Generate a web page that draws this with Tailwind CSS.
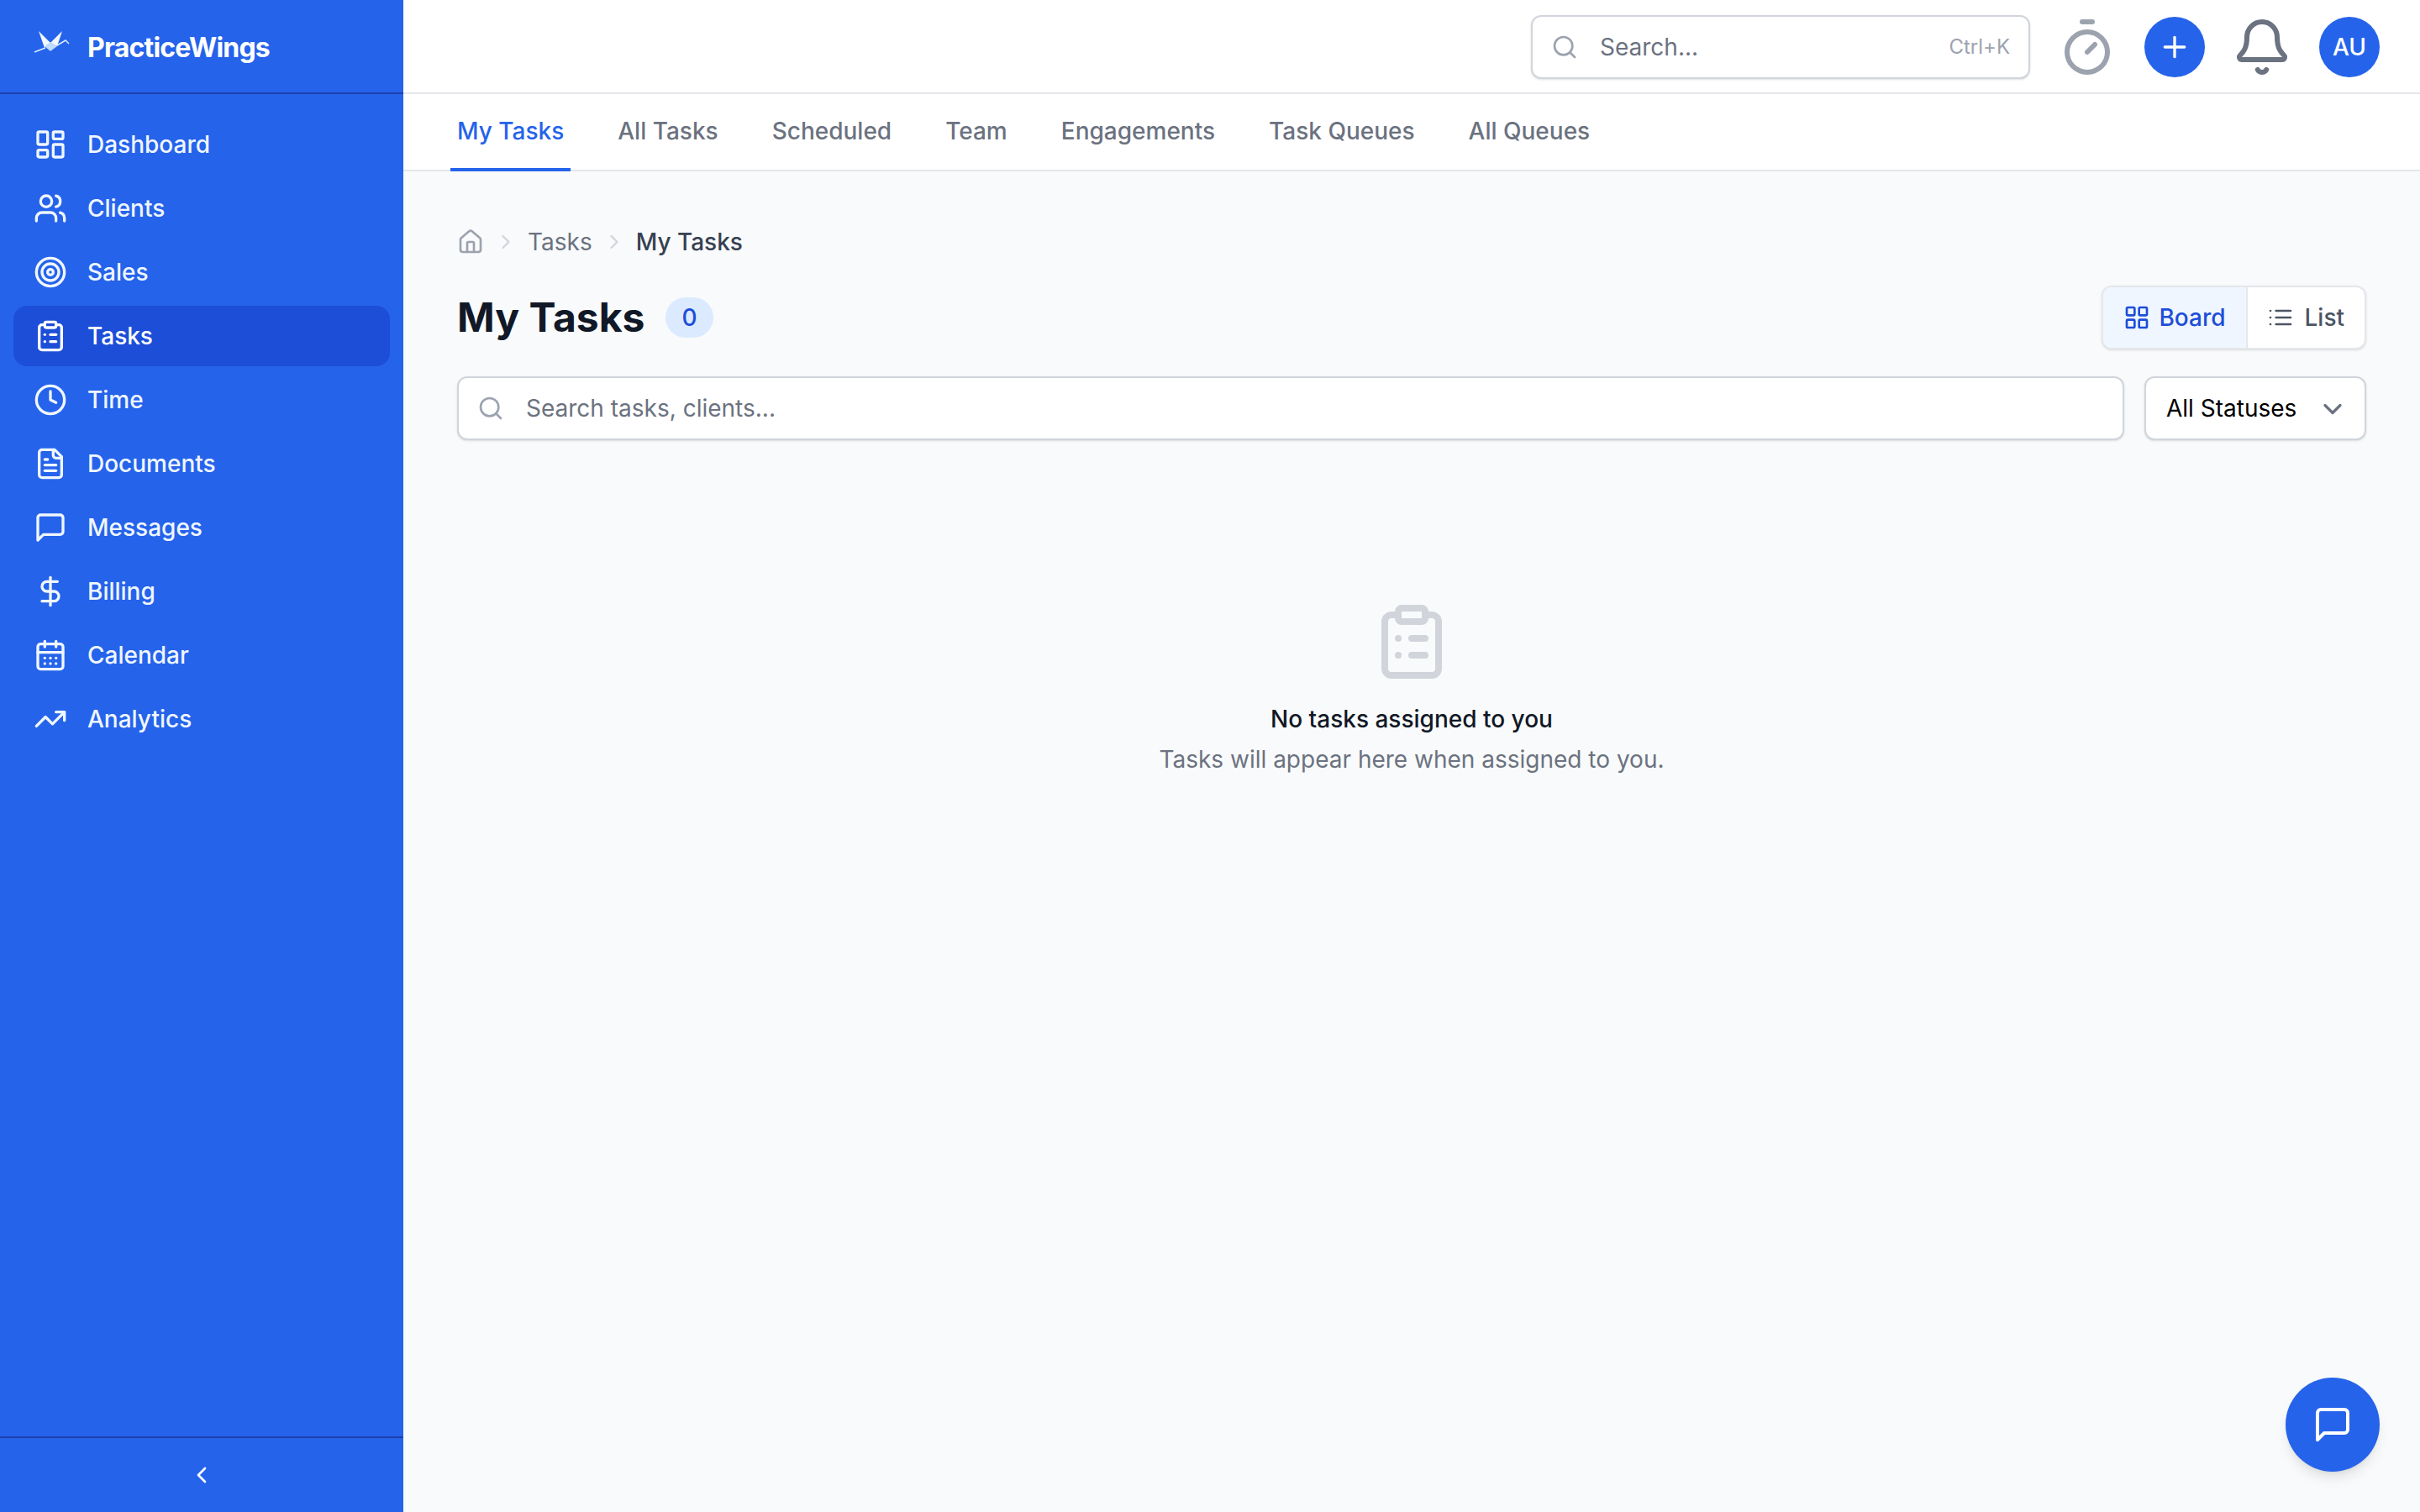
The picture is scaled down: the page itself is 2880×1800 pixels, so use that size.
<!DOCTYPE html>
<html lang="en">
<head>
  <meta charset="UTF-8">
  <meta name="viewport" content="width=device-width, initial-scale=1.0">
  <title>PracticeWings - My Tasks</title>
  <script src="https://cdn.jsdelivr.net/npm/@tailwindcss/browser@4"></script>
</head>
<body class="font-[Inter,sans-serif] bg-[#f9fafb] h-screen w-full overflow-hidden flex relative">

  <!-- sidebar -->
  <aside class="w-[480px] h-full shrink-0 bg-[#2563eb] flex flex-col text-[#eff6ff]">
    <div class="h-[112px] shrink-0 border-b-2 border-[#1e40af] flex items-center pl-[40px] pt-[4px] gap-[20px]">
      <svg class="w-[44px] h-[32px] -mt-[14px]" viewBox="40 34 44 32">
        <polygon points="46,37 60,51 53,57" fill="#ffffff" fill-opacity="0.95"/>
        <polygon points="74,37 60,51 68,55" fill="#ffffff" fill-opacity="0.95"/>
        <polygon points="60,50 68,55 60,61 53,55" fill="#bfdbfe"/>
        <path d="M41 62 L54 57 M68 54 L78 48 L82 52" fill="none" stroke="#dbeafe" stroke-width="1.5"/>
      </svg>
      <span class="text-[32px] leading-[48px] font-bold text-white tracking-[-0.8px]">PracticeWings</span>
    </div>

    <nav class="flex-1 px-[16px] pt-[24px] flex flex-col gap-[4px] text-[28px] leading-[40px] font-medium">
      <a class="h-[72px] px-[24px] rounded-[16px] flex items-center gap-[24px]">
        <svg class="w-[40px] h-[40px]" viewBox="0 0 24 24" fill="none" stroke="currentColor" stroke-width="2" stroke-linecap="round" stroke-linejoin="round"><rect x="3" y="3" width="7" height="9" rx="1"/><rect x="14" y="3" width="7" height="5" rx="1"/><rect x="14" y="12" width="7" height="9" rx="1"/><rect x="3" y="16" width="7" height="5" rx="1"/></svg>
        Dashboard
      </a>
      <a class="h-[72px] px-[24px] rounded-[16px] flex items-center gap-[24px]">
        <svg class="w-[40px] h-[40px]" viewBox="0 0 24 24" fill="none" stroke="currentColor" stroke-width="2" stroke-linecap="round" stroke-linejoin="round"><path d="M16 21v-2a4 4 0 0 0-4-4H6a4 4 0 0 0-4 4v2"/><circle cx="9" cy="7" r="4"/><path d="M22 21v-2a4 4 0 0 0-3-3.87"/><path d="M16 3.13a4 4 0 0 1 0 7.75"/></svg>
        Clients
      </a>
      <a class="h-[72px] px-[24px] rounded-[16px] flex items-center gap-[24px]">
        <svg class="w-[40px] h-[40px]" viewBox="0 0 24 24" fill="none" stroke="currentColor" stroke-width="2" stroke-linecap="round" stroke-linejoin="round"><circle cx="12" cy="12" r="10"/><circle cx="12" cy="12" r="6"/><circle cx="12" cy="12" r="2"/></svg>
        Sales
      </a>
      <a class="h-[72px] px-[24px] rounded-[16px] flex items-center gap-[24px] bg-[#1d4ed8] text-white">
        <svg class="w-[40px] h-[40px]" viewBox="0 0 24 24" fill="none" stroke="currentColor" stroke-width="2" stroke-linecap="round" stroke-linejoin="round"><rect x="8" y="2" width="8" height="4" rx="1"/><path d="M16 4h2a2 2 0 0 1 2 2v14a2 2 0 0 1-2 2H6a2 2 0 0 1-2-2V6a2 2 0 0 1 2-2h2"/><path d="M12 11h4"/><path d="M12 16h4"/><path d="M8 11h.01"/><path d="M8 16h.01"/></svg>
        Tasks
      </a>
      <a class="h-[72px] px-[24px] rounded-[16px] flex items-center gap-[24px]">
        <svg class="w-[40px] h-[40px]" viewBox="0 0 24 24" fill="none" stroke="currentColor" stroke-width="2" stroke-linecap="round" stroke-linejoin="round"><circle cx="12" cy="12" r="10"/><path d="M12 6v6l4 2"/></svg>
        Time
      </a>
      <a class="h-[72px] px-[24px] rounded-[16px] flex items-center gap-[24px]">
        <svg class="w-[40px] h-[40px]" viewBox="0 0 24 24" fill="none" stroke="currentColor" stroke-width="2" stroke-linecap="round" stroke-linejoin="round"><path d="M15 2H6a2 2 0 0 0-2 2v16a2 2 0 0 0 2 2h12a2 2 0 0 0 2-2V7z"/><path d="M14 2v4a2 2 0 0 0 2 2h4"/><path d="M10 9H8"/><path d="M16 13H8"/><path d="M16 17H8"/></svg>
        Documents
      </a>
      <a class="h-[72px] px-[24px] rounded-[16px] flex items-center gap-[24px]">
        <svg class="w-[40px] h-[40px]" viewBox="0 0 24 24" fill="none" stroke="currentColor" stroke-width="2" stroke-linecap="round" stroke-linejoin="round"><path d="M21 15a2 2 0 0 1-2 2H7l-4 4V5a2 2 0 0 1 2-2h14a2 2 0 0 1 2 2z"/></svg>
        Messages
      </a>
      <a class="h-[72px] px-[24px] rounded-[16px] flex items-center gap-[24px]">
        <svg class="w-[40px] h-[40px]" viewBox="0 0 24 24" fill="none" stroke="currentColor" stroke-width="2" stroke-linecap="round" stroke-linejoin="round"><line x1="12" x2="12" y1="2" y2="22"/><path d="M17 5H9.5a3.5 3.5 0 0 0 0 7h5a3.5 3.5 0 0 1 0 7H6"/></svg>
        Billing
      </a>
      <a class="h-[72px] px-[24px] rounded-[16px] flex items-center gap-[24px]">
        <svg class="w-[40px] h-[40px]" viewBox="0 0 24 24" fill="none" stroke="currentColor" stroke-width="2" stroke-linecap="round" stroke-linejoin="round"><path d="M8 2v4"/><path d="M16 2v4"/><rect x="3" y="4" width="18" height="18" rx="2"/><path d="M3 10h18"/><path d="M8 14h.01"/><path d="M12 14h.01"/><path d="M16 14h.01"/><path d="M8 18h.01"/><path d="M12 18h.01"/><path d="M16 18h.01"/></svg>
        Calendar
      </a>
      <a class="h-[72px] px-[24px] rounded-[16px] flex items-center gap-[24px]">
        <svg class="w-[40px] h-[40px]" viewBox="0 0 24 24" fill="none" stroke="currentColor" stroke-width="2" stroke-linecap="round" stroke-linejoin="round"><polyline points="22 7 13.5 15.5 8.5 10.5 2 17"/><polyline points="16 7 22 7 22 13"/></svg>
        Analytics
      </a>
    </nav>

    <div class="h-[90px] shrink-0 border-t-2 border-[#1e40af] flex items-center justify-center text-white">
      <svg class="w-[32px] h-[32px]" viewBox="0 0 24 24" fill="none" stroke="currentColor" stroke-width="2" stroke-linecap="round" stroke-linejoin="round"><path d="m15 18-6-6 6-6"/></svg>
    </div>
  </aside>

  <div class="flex-1 min-w-0 flex flex-col">
    <!-- top bar -->
    <header class="h-[112px] shrink-0 bg-white border-b-2 border-[#e5e7eb] flex items-center justify-end pt-[2px] pr-[48px] gap-[32px]">
      <div class="w-[594px] h-[76px] border-2 border-[#d1d5db] rounded-[12px] bg-white flex items-center pl-[22px] pr-[22px] shadow-sm">
        <svg class="w-[32px] h-[32px] text-[#9ca3af] shrink-0" viewBox="0 0 24 24" fill="none" stroke="currentColor" stroke-width="2" stroke-linecap="round" stroke-linejoin="round"><circle cx="11" cy="11" r="8"/><path d="m21 21-4.3-4.3"/></svg>
        <span class="ml-[26px] flex-1 text-[28px] text-[#6b7280]">Search...</span>
        <span class="text-[24px] text-[#9ca3af]">Ctrl+K</span>
      </div>
      <svg class="w-[72px] h-[72px] text-[#9ca3af]" viewBox="0 0 24 24" fill="none" stroke="currentColor" stroke-width="2" stroke-linecap="round" stroke-linejoin="round"><line x1="10" x2="14" y1="2" y2="2"/><line x1="12" x2="15" y1="14" y2="11"/><circle cx="12" cy="14" r="8"/></svg>
      <div class="w-[72px] h-[72px] rounded-full bg-[#2563eb] text-white flex items-center justify-center">
        <svg class="w-[40px] h-[40px]" viewBox="0 0 24 24" fill="none" stroke="currentColor" stroke-width="2" stroke-linecap="round" stroke-linejoin="round"><path d="M5 12h14"/><path d="M12 5v14"/></svg>
      </div>
      <svg class="w-[72px] h-[72px] text-[#6b7280]" viewBox="0 0 24 24" fill="none" stroke="currentColor" stroke-width="2" stroke-linecap="round" stroke-linejoin="round"><path d="M10.268 21a2 2 0 0 0 3.464 0"/><path d="M3.262 15.326A1 1 0 0 0 4 17h16a1 1 0 0 0 .74-1.673C19.41 13.956 18 12.499 18 8A6 6 0 0 0 6 8c0 4.499-1.411 5.956-2.738 7.326"/></svg>
      <div class="w-[72px] h-[72px] rounded-full bg-[#2563eb] text-white text-[28px] font-medium flex items-center justify-center">AU</div>
    </header>

    <!-- tabs -->
    <div class="h-[92px] shrink-0 bg-white border-b-2 border-[#e5e7eb] flex pl-[56px] gap-[48px] text-[28px] font-medium text-[#6b7280]">
      <a class="h-[92px] px-[8px] border-b-4 border-[#2563eb] text-[#2563eb] flex items-center">My Tasks</a>
      <a class="h-[92px] px-[8px] pb-[4px] flex items-center">All Tasks</a>
      <a class="h-[92px] px-[8px] pb-[4px] flex items-center">Scheduled</a>
      <a class="h-[92px] px-[8px] pb-[4px] flex items-center">Team</a>
      <a class="h-[92px] px-[8px] pb-[4px] flex items-center">Engagements</a>
      <a class="h-[92px] px-[8px] pb-[4px] flex items-center">Task Queues</a>
      <a class="h-[92px] px-[8px] pb-[4px] flex items-center">All Queues</a>
    </div>

    <main class="flex-1 px-[64px] pt-[64px]">
      <!-- breadcrumb -->
      <div class="flex items-center gap-[12px] h-[40px] text-[28px]">
        <svg class="w-[32px] h-[32px] text-[#9ca3af]" viewBox="0 0 24 24" fill="none" stroke="currentColor" stroke-width="2" stroke-linecap="round" stroke-linejoin="round"><path d="M15 21v-8a1 1 0 0 0-1-1h-4a1 1 0 0 0-1 1v8"/><path d="M3 10a2 2 0 0 1 .709-1.528l7-5.999a2 2 0 0 1 2.582 0l7 5.999A2 2 0 0 1 21 10v9a2 2 0 0 1-2 2H5a2 2 0 0 1-2-2z"/></svg>
        <svg class="w-[28px] h-[28px] text-[#d1d5db]" viewBox="0 0 24 24" fill="none" stroke="currentColor" stroke-width="2" stroke-linecap="round" stroke-linejoin="round"><path d="m9 18 6-6-6-6"/></svg>
        <span class="text-[#6b7280]">Tasks</span>
        <svg class="w-[28px] h-[28px] text-[#d1d5db]" viewBox="0 0 24 24" fill="none" stroke="currentColor" stroke-width="2" stroke-linecap="round" stroke-linejoin="round"><path d="m9 18 6-6-6-6"/></svg>
        <span class="text-[#374151] font-medium">My Tasks</span>
      </div>

      <!-- title row -->
      <div class="mt-[32px] flex items-center justify-between">
        <div class="flex items-center gap-[25px]">
          <h1 class="text-[48px] leading-[64px] font-bold text-[#111827]">My Tasks</h1>
          <span class="h-[48px] px-[19px] rounded-full bg-[#dbeafe] text-[#1d4ed8] text-[28px] font-medium flex items-center">0</span>
        </div>
        <div class="h-[76px] flex border-2 border-[#e5e7eb] rounded-[12px] overflow-hidden shadow-sm bg-white text-[28px] font-medium">
          <div class="px-[24px] flex items-center gap-[10px] bg-[#eff6ff] text-[#1d4ed8] border-r-2 border-[#e5e7eb]">
            <svg class="w-[32px] h-[32px]" viewBox="0 0 24 24" fill="none" stroke="currentColor" stroke-width="2" stroke-linecap="round" stroke-linejoin="round"><rect x="3" y="3" width="7" height="7" rx="1"/><rect x="14" y="3" width="7" height="7" rx="1"/><rect x="14" y="14" width="7" height="7" rx="1"/><rect x="3" y="14" width="7" height="7" rx="1"/></svg>
            Board
          </div>
          <div class="pl-[23px] pr-[24px] flex items-center gap-[13px] text-[#4b5563]">
            <svg class="w-[32px] h-[32px]" viewBox="0 0 24 24" fill="none" stroke="currentColor" stroke-width="2" stroke-linecap="round" stroke-linejoin="round"><path d="M3 12h.01"/><path d="M3 18h.01"/><path d="M3 6h.01"/><path d="M8 12h13"/><path d="M8 18h13"/><path d="M8 6h13"/></svg>
            List
          </div>
        </div>
      </div>

      <!-- filters -->
      <div class="mt-[32px] flex gap-[24px]">
        <div class="flex-1 h-[76px] border-2 border-[#d1d5db] rounded-[12px] bg-white shadow-sm flex items-center pl-[22px] gap-[26px] text-[28px] text-[#6b7280]">
          <svg class="w-[32px] h-[32px] text-[#9ca3af]" viewBox="0 0 24 24" fill="none" stroke="currentColor" stroke-width="2" stroke-linecap="round" stroke-linejoin="round"><circle cx="11" cy="11" r="8"/><path d="m21 21-4.3-4.3"/></svg>
          Search tasks, clients...
        </div>
        <div class="w-[264px] h-[76px] border-2 border-[#d1d5db] rounded-[12px] bg-white shadow-sm flex items-center justify-between pl-[24px] pr-[20px] text-[28px] text-black">
          All Statuses
          <svg class="w-[36px] h-[36px] mt-[2px] text-[#6b7280]" viewBox="0 0 24 24" fill="none" stroke="currentColor" stroke-width="2.2" stroke-linecap="round" stroke-linejoin="round"><path d="m6 9 6 6 6-6"/></svg>
        </div>
      </div>

      <!-- empty state -->
      <div class="pt-[192px] flex flex-col items-center text-center">
        <svg class="w-[96px] h-[96px] text-[#d1d5db]" viewBox="0 0 24 24" fill="none" stroke="currentColor" stroke-width="2" stroke-linecap="round" stroke-linejoin="round"><rect x="8" y="2" width="8" height="4" rx="1"/><path d="M16 4h2a2 2 0 0 1 2 2v14a2 2 0 0 1-2 2H6a2 2 0 0 1-2-2V6a2 2 0 0 1 2-2h2"/><path d="M12 11h4"/><path d="M12 16h4"/><path d="M8 11h.01"/><path d="M8 16h.01"/></svg>
        <h3 class="mt-[24px] text-[28px] leading-[40px] font-medium text-[#111827]">No tasks assigned to you</h3>
        <p class="mt-[8px] text-[28px] leading-[40px] text-[#6b7280]">Tasks will appear here when assigned to you.</p>
      </div>
    </main>
  </div>

  <!-- chat button -->
  <div class="absolute right-[48px] bottom-[48px] w-[112px] h-[112px] rounded-full bg-[#2563eb] text-white flex items-center justify-center shadow-lg">
    <svg class="w-[48px] h-[48px]" viewBox="0 0 24 24" fill="none" stroke="currentColor" stroke-width="2" stroke-linecap="round" stroke-linejoin="round"><path d="M21 15a2 2 0 0 1-2 2H7l-4 4V5a2 2 0 0 1 2-2h14a2 2 0 0 1 2 2z"/></svg>
  </div>

</body>
</html>
